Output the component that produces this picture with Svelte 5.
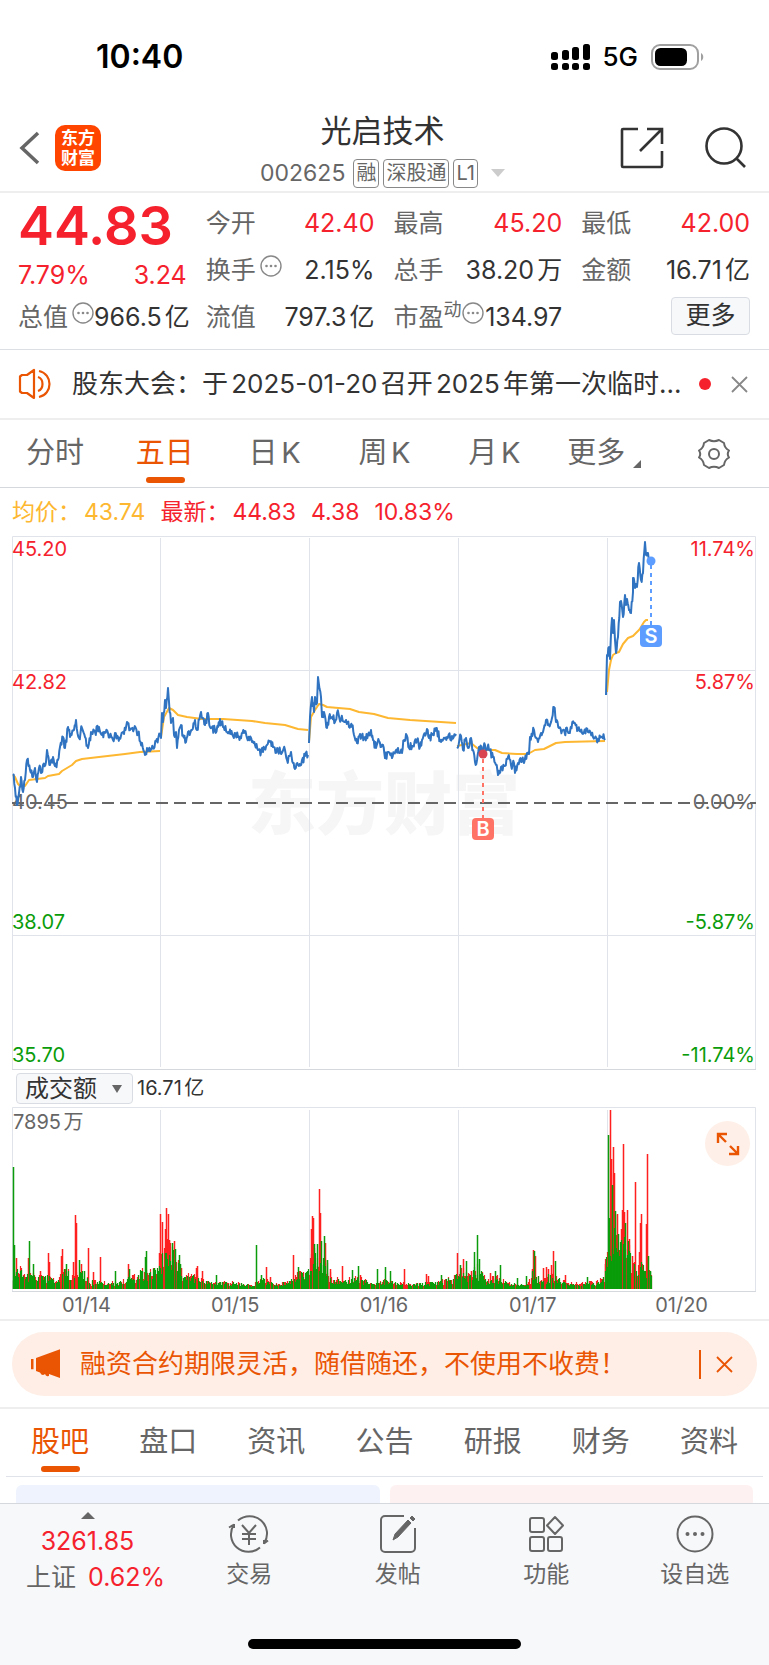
<script lang="ts">
    type Point = [number, number];

    const columns = [
        [
            { label: "今开", value: "42.40", up: true },
            { label: "换手", value: "2.15%", info: true },
            { label: "流值", value: "797.3亿" },
        ],
        [
            { label: "最高", value: "45.20", up: true },
            { label: "总手", value: "38.20万" },
            { label: "市盈", sup: "动", value: "134.97", info: true },
        ],
        [
            { label: "最低", value: "42.00", up: true },
            { label: "金额", value: "16.71亿" },
        ],
    ];

    const periods = ["分时", "五日", "日K", "周K", "月K", "更多"];
    const sections = ["股吧", "盘口", "资讯", "公告", "研报", "财务", "资料"];
    const days = ["01/14", "01/15", "01/16", "01/17", "01/20"];
    const dividers = [148, 297, 446, 595];

    let period = $state("五日");
    let section = $state("股吧");

    const axis = [
        { y: 20, price: "45.20", pct: "11.74%", color: "#f5222d" },
        { y: 153, price: "42.82", pct: "5.87%", color: "#f5222d" },
        { y: 273, price: "40.45", pct: "0.00%", color: "#666" },
        { y: 393, price: "38.07", pct: "-5.87%", color: "#0a9c0a" },
        { y: 526, price: "35.70", pct: "-11.74%", color: "#0a9c0a" },
    ];

    // one array per trading day, x y pairs
    const prices = [
        "1 237 3 251 5 268 7 256 9 240 11 255 13 243 15 223 18 233 21 240 23 231 25 245 27 231 29 236 31 228 34 225 35 213 38 228 41 220 43 229 46 223 48 210 51 200 53 211 56 190 58 200 62 193 64 183 67 201 70 191 73 200 76 211 79 195 83 195 87 190 90 198 92 195 96 196 101 203 103 196 106 200 112 197 115 185 118 193 122 192 126 197 130 206 133 218 135 211 141 211 144 204 148 197 149 201 150 176 151 185 153 163 154 171 156 151 157 165 159 186 161 181 162 198 164 195 165 211 167 193 169 188 171 198 174 205 176 195 180 193 183 183 185 193 189 175 191 181 193 188 196 176 198 190 203 193 206 190 208 182 211 190 215 195 221 199 226 200 232 196 235 201 240 205 243 208 246 213 251 215 255 208 258 205 261 210 266 213 273 213 275 223 279 215 281 226 283 232 286 228 290 223 293 219 296 218",
        "297 206 298 180 300 160 302 175 303 160 305 166 306 140 309 160 310 180 312 175 315 191 317 180 320 180 323 185 325 176 329 183 334 183 337 190 340 190 342 198 345 206 348 197 353 200 359 193 361 203 364 211 367 204 371 208 373 221 376 215 380 221 382 216 386 211 390 216 392 203 394 197 397 211 401 209 405 203 408 210 410 203 415 192 417 201 421 197 424 191 429 205 435 200 440 199 444 197",
        "445 210 449 199 451 213 454 201 456 211 459 201 461 213 463 225 465 223 467 210 471 216 473 208 477 213 481 220 484 228 486 238 489 230 493 229 496 220 499 228 502 226 503 236 506 226 510 223 512 226 515 216 517 217 518 200 522 193 526 205 529 196 531 195 534 183 536 188 540 181 542 170 544 185 547 191 551 193 557 196 562 186 566 193 571 197 576 195 581 200 586 202 590 200 593 203",
        "594 158 595 118 597 110 598 122 600 81 601 96 602 83 603 103 604 116 606 100 608 65 609 64 611 80 613 58 614 68 615 62 617 73 619 76 621 55 621 41 623 51 625 50 627 26 629 43 631 36 633 5 634 18 636 16 637 24",
    ];

    const averages = [
        "1 238 3 240 6 247 8 249 13 249 17 243 25 242 33 241 36 239 47 237 50 234 60 228 64 224 70 222 87 220 113 217 128 215 148 214",
        "149 200 152 180 157 171 161 173 166 178 175 180 190 182 211 182 240 184 253 186 273 188 286 192 296 193",
        "297 205 299 180 303 173 305 170 307 167 311 168 315 170 338 172 347 175 362 177 376 181 398 183 444 186",
        "445 209 459 206 465 211 471 213 483 213 490 216 505 217 516 217 523 213 532 212 538 209 544 206 553 205 593 204",
        "595 155 597 133 599 123 601 118 604 116 607 115 611 107 616 101 621 99 627 93 629 90 632 85 634 83 636 83",
    ];

    // usual turnover level along the five days, the peaks stand on top of it
    const level = "0 12 5 22 12 14 25 12 35 12 44 7 52 20 60 14 70 16 76 8 90 6 105 6 118 12 130 18 146 18 150 40 158 42 165 28 170 10 180 14 190 8 200 5 220 6 240 3 250 10 262 4 275 6 283 14 295 16 300 35 312 28 318 14 330 6 345 12 360 4 370 8 385 6 400 4 425 7 440 10 448 18 456 14 465 22 474 9 485 12 495 5 515 3 521 18 530 7 536 14 545 10 555 5 575 5 590 10 596 40 598 75 603 62 608 42 611 55 616 45 620 22 627 30 633 20 637 20 640 12";
    const redPeaks = "4 31 16 31 28 18 36 36 37 27 49 33 50 40 61 27 63 74 64 66 69 25 76 41 81 17 88 32 116 25 147 36 148 75 150 67 154 81 153 60 156 75 157 49 162 48 169 21 184 21 185 23 190 18 254 22 258 12 281 34 299 60 300 73 301 71 307 100 308 76 313 46 318 20 330 23 348 14 392 20 414 15 416 13 445 36 451 30 459 18 478 16 520 20 521 39 523 33 531 21 534 22 536 20 539 24 541 38 553 14 593 25 595 32 598 179 599 130 601 142 602 116 605 75 609 60 610 79 611 145 612 77 615 79 617 50 620 33 623 107 627 37 628 66 629 75 634 65 635 135";
    const greenPeaks = "1 122 2 44 17 48 21 25 54 25 67 29 72 18 103 18 117 20 133 32 134 38 142 21 160 46 163 40 167 34 168 25 204 14 244 44 249 14 286 22 302 45 305 45 309 48 312 53 315 29 340 19 346 23 365 20 373 22 378 18 429 14 448 24 454 28 462 37 465 54 467 30 483 18 488 24 505 11 514 13 522 38 543 28 575 12 596 154 597 71 600 104 603 78 606 55 613 66 636 33 638 18";

    function parse(text: string): Point[] {
        const n = text.split(" ").map(Number);
        const out: Point[] = [];
        for (let i = 0; i < n.length; i += 2) out.push([n[i], n[i + 1]]);
        return out;
    }

    function rand(i: number) {
        const v = Math.sin(i * 12.9898) * 43758.5453;
        return v - Math.floor(v);
    }

    // adds the minute ticks between two known prices
    function ticks(text: string) {
        const pts = parse(text);
        const out: string[] = [];
        pts.forEach(([x, y], i) => {
            out.push(x + "," + y);
            if (i == pts.length - 1) return;
            const [nx, ny] = pts[i + 1];
            const steps = Math.round((nx - x) / 0.8);
            for (let s = 1; s < steps; s++) {
                const t = s / steps;
                const jump = (rand(i * 7 + s + x) - 0.5) * 9;
                out.push((x + (nx - x) * t).toFixed(1) + "," + (y + (ny - y) * t + jump).toFixed(1));
            }
        });
        return out.join(" ");
    }

    function levelAt(x: number) {
        const pts = parse(level);
        const i = pts.findIndex((p) => p[0] > x);
        if (i < 1) return pts[0][1];
        const [ax, ay] = pts[i - 1];
        const [bx, by] = pts[i];
        return ay + ((by - ay) * (x - ax)) / (bx - ax);
    }

    const bars = (text: string) => parse(text).map(([x, h]) => `M${x}.5 182v-${h}`).join("");

    let redBase = "";
    let greenBase = "";
    for (let x = 1; x < 640; x++) {
        const h = levelAt(x);
        redBase += `M${x}.5 182v-${Math.round(h * (0.3 + rand(x + 900) * 0.9)) + 1}`;
        if (rand(x) > 0.25) greenBase += `M${x}.5 182v-${Math.round(h * (0.35 + rand(x + 300) * 0.75)) + 1}`;
    }
</script>

{#snippet info()}
    <svg class="info" width="22" height="22" viewBox="0 0 22 22" aria-hidden="true">
        <circle cx="11" cy="11" r="10" fill="none" stroke="#888" stroke-width="1.4" />
        <circle cx="6.5" cy="11" r="1.3" fill="#888" />
        <circle cx="11" cy="11" r="1.3" fill="#888" />
        <circle cx="15.500" cy="11" r="1.3" fill="#888" />
    </svg>
{/snippet}

<div class="page">
    <div class="status">
        <span class="clock">10:40</span>
        <div class="signals">
            <svg width="40" height="28" viewBox="0 0 40 28" aria-hidden="true">
                <rect x="1" y="9" width="7" height="8" rx="2.500" />
                <rect x="12" y="7" width="7" height="10" rx="2.500" />
                <rect x="22" y="4" width="7" height="13" rx="2.500" />
                <rect x="33" y="1" width="7" height="16" rx="2.500" />
                <rect x="1" y="20" width="7" height="7" rx="2.500" />
                <rect x="12" y="20" width="7" height="7" rx="2.500" />
                <rect x="22" y="20" width="7" height="7" rx="2.500" />
                <rect x="33" y="20" width="7" height="7" rx="2.500" />
            </svg>
            <span>5G</span>
            <svg width="54" height="28" viewBox="0 0 54 28" aria-hidden="true">
                <rect x="2" y="2" width="46" height="24" rx="8" fill="none" stroke="#a0a0a0" stroke-width="2" />
                <rect x="5" y="5" width="32" height="18" rx="5.500" />
                <path d="M51 10c3 1.500 3 6.500 0 8z" fill="#a0a0a0" />
            </svg>
        </div>
    </div>

    <header>
        <div class="left">
            <button aria-label="返回">
                <svg width="24" height="36" viewBox="0 0 24 36"><path d="M21 3 5 18l16 15" fill="none" stroke="#666" stroke-width="3.500" /></svg>
            </button>
            <a class="logo" href="#home">东方财富</a>
        </div>
        <div class="title">
            <h1>光启技术</h1>
            <button class="code">
                <span class="number">002625</span>
                <span class="tag">融</span>
                <span class="tag">深股通</span>
                <span class="tag">L1</span>
                <i></i>
            </button>
        </div>
        <div class="right">
            <button aria-label="分享">
                <svg width="44" height="44" viewBox="0 0 44 44" fill="none" stroke="#333" stroke-width="2.600">
                    <path d="M18 3H3a1 1 0 0 0-1 1v36a1 1 0 0 0 1 1h38a1 1 0 0 0 1-1V25M27 3h15v15M42 3 20 25" />
                </svg>
            </button>
            <button aria-label="搜索">
                <svg width="44" height="44" viewBox="0 0 44 44" fill="none" stroke="#333" stroke-width="2.600">
                    <circle cx="20" cy="20" r="17.500" /><path d="m32 32 9 9" />
                </svg>
            </button>
        </div>
    </header>

    <section class="quote">
        <div class="column">
            <div class="price">44.83</div>
            <div class="change"><span>7.79%</span><span>3.24</span></div>
            <div class="cell"><span class="label">总值</span>{@render info()}<span class="value">966.5亿</span></div>
        </div>
        {#each columns as column, i}
            <div class="column">
                {#each column as item}
                    <div class="cell">
                        <span class="label">{item.label}</span>
                        {#if item.sup}<span class="sup">{item.sup}</span>{/if}
                        {#if item.info}{@render info()}{/if}
                        <span class="value" class:up={item.up}>{item.value}</span>
                    </div>
                {/each}
                {#if i == 2}
                    <div class="cell"><button class="more">更多</button></div>
                {/if}
            </div>
        {/each}
    </section>

    <div class="news">
        <svg width="34" height="32" viewBox="0 0 34 32" fill="none" stroke="#ea5504" stroke-width="2.200" stroke-linejoin="round" aria-hidden="true">
            <path d="M2 8.500 4 7h5l7-5v28l-7-5H4l-2-1.500zM20 9c6 2 6 12 0 14M21 3c14 3 14 23 0 26" />
        </svg>
        <a href="#news">股东大会：于2025-01-20召开2025年第一次临时...</a>
        <span class="dot"></span>
        <button aria-label="关闭公告">
            <svg width="17" height="17" viewBox="0 0 17 17"><path d="m1 1 15 15M16 1 1 16" stroke="#888" stroke-width="1.800" /></svg>
        </button>
    </div>

    <nav class="periods">
        {#each periods as name}
            <button class:active={period == name} onclick={() => (period = name)}>{name}{#if name == "更多"}<i></i>{/if}</button>
        {/each}
        <button aria-label="设置">
            <svg width="34" height="32" viewBox="0 0 34 32" fill="none" stroke="#666" stroke-width="2">
                <path d="M12 2Q17 4.500 22 2L27 5Q27.500 10 32 12.500Q29.500 16 32 19.500Q27.500 22 27 27L22 30Q17 27.500 12 30L7 27Q6.500 22 2 19.500Q4.500 16 2 12.500Q6.500 10 7 5Z" stroke-linejoin="round" />
                <circle cx="17" cy="16" r="5" />
            </svg>
        </button>
    </nav>

    <div class="legend">
        <span class="average">均价：<b>43.74</b></span>
        <span>最新：<b>44.83</b></span>
        <span>4.38</span>
        <span>10.83%</span>
    </div>

    <section class="chart">
        <svg viewBox="0 0 744 534" role="img" aria-label="五日走势">
            <text x="236" y="293" class="mark">东方财富</text>
            <g class="grid">
                <path d="M0 134.500H744M0 399.500H744" />
                {#each dividers as x}<path d="M{x}.5 2V531" />{/each}
                <path d="M.5 533V.5H743.500V533" />
                <path d="M0 533.500H744" stroke="#d5d8dc" />
            </g>
            {#each axis as row}
                <text x="0" y={row.y} fill={row.color}>{row.price}</text>
                <text x="743" y={row.y} fill={row.color} text-anchor="end">{row.pct}</text>
            {/each}
            <path d="M0 267H744" stroke="#666" stroke-width="2" stroke-dasharray="12 6" />
            <g transform="translate(0 1)">
                {#each averages as line}
                    <polyline points={line} stroke="#fdb731" />
                {/each}
                {#each prices as line}
                    <polyline points={ticks(line)} stroke="#2f73c1" />
                {/each}
                <path d="M471 222V282" stroke="#ff7366" stroke-width="2" stroke-dasharray="4 4" />
                <circle cx="471" cy="217" r="4.500" fill="#d9444f" />
                <rect x="460" y="281" width="22" height="22" rx="4" fill="#ff7366" />
                <text x="471" y="299" class="flag">B</text>
                <path d="M639 28V88" stroke="#5c9dff" stroke-width="2" stroke-dasharray="4 4" />
                <circle cx="639" cy="24" r="4.500" fill="#5c9dff" />
                <rect x="628" y="88" width="22" height="22" rx="4" fill="#5c9dff" />
                <text x="639" y="106" class="flag">S</text>
            </g>
        </svg>
    </section>

    <div class="toolbar">
        <label class="picker">
            <select aria-label="指标">
                <option>成交额</option>
                <option>成交量</option>
            </select>
            <i></i>
        </label>
        <span>16.71亿</span>
    </div>

    <section class="volume">
        <svg viewBox="0 0 744 185" role="img" aria-label="成交额">
            <g class="grid">
                {#each dividers as x}<path d="M{x}.5 3V182" />{/each}
                <path d="M.5 184V.5H743.500V184" />
                <path d="M0 184.500H744" stroke="#d5d8dc" />
            </g>
            <path d={redBase} stroke="#f52323" stroke-width="1.200" />
            <path d={bars(redPeaks)} stroke="#ff1f1f" stroke-width="1.500" />
            <path d={greenBase} stroke="#0a9c0a" stroke-width="1.200" />
            <path d={bars(greenPeaks)} stroke="#0a9c0a" stroke-width="1.500" />
            <text x="1" y="22" fill="#666">7895万</text>
        </svg>
        <button class="expand" aria-label="全屏">
            <svg width="24" height="24" viewBox="0 0 24 24" fill="none" stroke="#ea5504" stroke-width="2.400">
                <path d="M11 2H2v9M2 2l8 8M22 14v8h-9M22 22l-8-8" />
            </svg>
        </button>
    </section>

    <div class="dates">
        {#each days as day}<span>{day}</span>{/each}
    </div>

    <div class="promo">
        <div class="banner">
            <svg width="32" height="38" viewBox="0 0 32 38" fill="#ea5504" aria-hidden="true">
                <path d="M1 13h2.500v13H1zM6 12 30 1v36l-11-5v2q-3 2-4-2-3 3-5-2l-4-2z" transform="translate(0 3.500) scale(1 .8)" />
            </svg>
            <a href="#margin">融资合约期限灵活，随借随还，不使用不收费！</a>
            <button aria-label="关闭">
                <svg width="17" height="17" viewBox="0 0 17 17"><path d="m1 1 15 15M16 1 1 16" stroke="#ea5504" stroke-width="1.800" /></svg>
            </button>
        </div>
    </div>

    <nav class="sections">
        {#each sections as name}
            <button class:active={section == name} onclick={() => (section = name)}>{name}</button>
        {/each}
    </nav>

    <div class="cards">
        <div></div>
        <div class="pink"></div>
    </div>

    <footer>
        <div class="bar">
            <button class="index">
                <i></i>
                <span class="up">3261.85</span>
                <span class="market">上证 <span class="up">0.62%</span></span>
            </button>
            <a href="#trade">
                <svg width="44" height="40" viewBox="0 0 44 40">
                    <path d="M11 6.500A17.500 17.500 0 0 1 37 29.500l4-3M37 30v-4M33 33.500A17.500 17.500 0 0 1 7 10.500l-5 3M7 10v4" />
                    <path d="m15 11 7 8 7-8M22 19v12M15 20h14M15 25h14" />
                </svg>
                交易
            </a>
            <a href="#post">
                <svg width="44" height="40" viewBox="0 0 44 40">
                    <path d="M28 2H9a4 4 0 0 0-4 4v28a4 4 0 0 0 4 4h26a4 4 0 0 0 4-4V14" />
                    <path d="M17 26 19 20 32 6l3 3-13 14zM34 4l2-2 3 3-2 2z" fill="#666" stroke-width="1" />
                </svg>
                发帖
            </a>
            <a href="#tools">
                <svg width="44" height="40" viewBox="0 0 44 40">
                    <rect x="6" y="4" width="14" height="14" rx="2" />
                    <rect x="6" y="23" width="14" height="14" rx="2" />
                    <rect x="24" y="23" width="14" height="14" rx="2" />
                    <path d="m31 3 8 8.500-8 8.500-8-8.500z" stroke-linejoin="round" />
                </svg>
                功能
            </a>
            <a href="#watch">
                <svg width="44" height="40" viewBox="0 0 44 40">
                    <circle cx="22" cy="20" r="17.500" />
                    <g fill="#666" stroke="none"><circle cx="14.500" cy="20" r="2" /><circle cx="22" cy="20" r="2" /><circle cx="29.500" cy="20" r="2" /></g>
                </svg>
                设自选
            </a>
        </div>
        <div class="home"></div>
    </footer>
</div>

<style>
    :global(body) {
        background: #fff;
    }
    .page {
        font-family: Inter, "Noto Sans CJK SC", sans-serif;
        line-height: 1.25;
        text-autospace: normal;
        color: #333;
        overflow: hidden;
    }
    button, select {
        font: inherit;
        color: inherit;
        background: none;
        border: 0;
        padding: 0;
        cursor: pointer;
    }
    a {
        color: inherit;
        text-decoration: none;
    }
    svg {
        display: block;
        flex: none;
    }
    .up {
        color: #f5222d;
    }

    .status {
        display: flex;
        justify-content: space-between;
        align-items: center;
        height: 108px;
        box-sizing: border-box;
        padding: 6px 65px 0 96px;
        color: #000;
    }
    .clock {
        font-size: 32px;
        font-weight: 600;
    }
    .signals {
        display: flex;
        align-items: center;
        gap: 12px;
        font-size: 26px;
        font-weight: 500;
    }

    header {
        display: grid;
        grid-template-columns: 1fr auto 1fr;
        align-items: center;
        padding: 5px 21px 3px 17px;
        border-bottom: 2px solid #eee;
    }
    .left, .right {
        display: flex;
        align-items: center;
        gap: 14px;
        padding-bottom: 6px;
    }
    .right {
        justify-content: flex-end;
        gap: 40px;
    }
    .logo {
        width: 36px;
        padding: 3px 5px;
        border-radius: 10px;
        background: #ff4500;
        color: #fff;
        font-size: 17px;
        font-weight: 700;
        line-height: 20px;
        text-align: center;
    }
    .title {
        display: flex;
        flex-direction: column;
        align-items: center;
        gap: 9px;
    }
    h1 {
        margin: 0;
        font-size: 31px;
        font-weight: 400;
        line-height: 36px;
    }
    .code {
        display: flex;
        align-items: center;
        gap: 4px;
        height: 30px;
        color: #666;
    }
    .number {
        font-size: 23px;
        margin-right: 4px;
    }
    .tag {
        border: 1px solid #888;
        border-radius: 4px;
        padding: 0 2px;
        font-size: 20px;
        line-height: 27px;
    }
    .code i {
        margin-left: 9px;
        border: 7px solid transparent;
        border-top: 8px solid #ccc;
        border-bottom: 0;
    }

    .quote {
        display: grid;
        grid-template-columns: repeat(4, minmax(0, 1fr));
        gap: 19px;
        padding: 7px 19px 8px 18px;
        border-bottom: 1px solid #dcdfe3;
        font-size: 25px;
    }
    .price {
        height: 52px;
        line-height: 52px;
        font-size: 54px;
        font-weight: 600;
        color: #f5222d;
    }
    .change {
        display: flex;
        justify-content: space-between;
        align-items: center;
        height: 36px;
        padding-top: 6px;
        color: #f5222d;
    }
    .cell {
        display: flex;
        align-items: center;
        height: 47px;
        white-space: nowrap;
    }
    .label {
        color: #666;
    }
    .cell .value {
        margin-left: auto;
    }
    .sup {
        font-size: 18px;
        color: #666;
        padding-bottom: 14px;
    }
    .cell :global(.info) {
        margin-bottom: 10px;
    }
    .label + :global(.info) {
        margin-left: 4px;
    }
    .more {
        margin-left: auto;
        margin-bottom: 4px;
        width: 79px;
        height: 38px;
        border: 1px solid #d9dde3;
        border-radius: 4px;
        background: #f7f8fa;
    }

    .news {
        display: flex;
        align-items: center;
        height: 68px;
        padding: 0 21px 0 18px;
        border-bottom: 2px solid #eee;
        font-size: 26px;
    }
    .news a {
        flex: 1;
        margin-left: 20px;
        white-space: nowrap;
    }
    .dot {
        width: 12px;
        height: 12px;
        border-radius: 50%;
        background: #f5222d;
        margin-right: 20px;
    }

    .periods {
        display: grid;
        grid-template-columns: repeat(7, 1fr);
        height: 67px;
        border-bottom: 1px solid #d5d8dc;
        font-size: 29px;
        color: #666;
    }
    .periods button, .sections button {
        position: relative;
        display: flex;
        align-items: center;
        justify-content: center;
    }
    .periods i {
        margin: 20px 0 0 8px;
        border: 4px solid #666;
        border-top-color: transparent;
        border-left-color: transparent;
    }
    .active {
        color: #ea5504;
    }
    .active::after {
        content: "";
        position: absolute;
        left: 50%;
        bottom: 4px;
        width: 39px;
        height: 6px;
        margin-left: -19px;
        border-radius: 3px;
        background: #ea5504;
    }

    .legend {
        display: flex;
        align-items: center;
        gap: 15px;
        height: 48px;
        padding: 0 12px;
        font-size: 23px;
        color: #f5222d;
    }
    .legend b {
        margin-left: 3px;
        font-weight: 400;
    }
    .legend .average {
        color: #fdb731;
    }

    .chart, .volume {
        position: relative;
        padding: 0 13px 0 12px;
    }
    .chart svg, .volume > svg {
        width: 100%;
        height: auto;
    }
    .chart text, .volume text {
        font-size: 20px;
    }
    .chart polyline {
        fill: none;
        stroke-width: 2;
        stroke-linejoin: round;
    }
    .grid {
        fill: none;
        stroke: #e0e3ea;
    }
    .chart .mark {
        font-size: 68px;
        font-weight: 900;
        fill: #f6f6f6;
    }
    .chart .flag {
        font-size: 20px;
        font-weight: 600;
        fill: #fff;
        text-anchor: middle;
    }

    .toolbar {
        display: flex;
        align-items: center;
        gap: 4px;
        height: 37px;
        padding: 0 16px;
        font-size: 20px;
    }
    .picker {
        display: flex;
        align-items: center;
        width: 115px;
        height: 29px;
        border: 1px solid #d9dde3;
        border-radius: 4px;
        background: #f7f8fa;
    }
    .picker select {
        appearance: none;
        flex: 1;
        padding-left: 8px;
        font-size: 24px;
        line-height: 28px;
    }
    .picker i {
        margin-right: 10px;
        border: 5px solid transparent;
        border-top: 8px solid #666;
        border-bottom: 0;
    }
    .expand {
        position: absolute;
        top: 14px;
        right: 19px;
        width: 45px;
        height: 45px;
        display: flex;
        align-items: center;
        justify-content: center;
        border-radius: 50%;
        background: #fef0e8;
    }
    .dates {
        display: grid;
        grid-template-columns: repeat(5, 1fr);
        padding: 0 13px 0 12px;
        border-bottom: 2px solid #eee;
        font-size: 20px;
        line-height: 27px;
        text-align: center;
        color: #666;
    }

    .promo {
        padding: 11px 12px;
        border-bottom: 2px solid #eee;
    }
    .banner {
        display: flex;
        align-items: center;
        height: 64px;
        padding: 0 24px 0 18px;
        border-radius: 32px;
        background: #feeee6;
        color: #ea5504;
        font-size: 26px;
    }
    .banner a {
        flex: 1;
        margin-left: 18px;
    }
    .banner button {
        height: 29px;
        padding-left: 15px;
        border-left: 2px solid #ea5504;
    }

    .sections {
        display: grid;
        grid-template-columns: repeat(7, 1fr);
        height: 67px;
        margin: 0 6px;
        border-bottom: 1px solid #e0e3ea;
        font-size: 29px;
        color: #666;
    }
    .cards {
        display: grid;
        grid-template-columns: 1fr 1fr;
        gap: 10px;
        padding: 8px 16px 0;
    }
    .cards div {
        height: 18px;
        border-radius: 6px 6px 0 0;
        background: #eef3fd;
    }
    .cards .pink {
        background: #fef1f2;
    }

    footer {
        border-top: 1px solid #d5d8dc;
        background: #f7f8fa;
        padding-bottom: 16px;
    }
    .bar {
        display: grid;
        grid-template-columns: 175px repeat(4, 1fr);
        height: 135px;
        font-size: 23px;
        line-height: 32px;
        color: #666;
    }
    .bar a {
        display: flex;
        flex-direction: column;
        align-items: center;
        gap: 4px;
        padding-top: 10px;
    }
    .bar a svg {
        fill: none;
        stroke: #666;
        stroke-width: 2;
    }
    .index {
        display: flex;
        flex-direction: column;
        align-items: center;
        padding-top: 8px;
        font-size: 25px;
        line-height: 36px;
    }
    .index i {
        border: 7px solid transparent;
        border-bottom: 7px solid #666;
        border-top: 0;
        margin-bottom: 4px;
    }
    .market {
        display: flex;
        gap: 12px;
        margin-left: 16px;
    }
    .home {
        width: 273px;
        height: 10px;
        margin: 0 auto;
        border-radius: 5px;
        background: #000;
    }
</style>
